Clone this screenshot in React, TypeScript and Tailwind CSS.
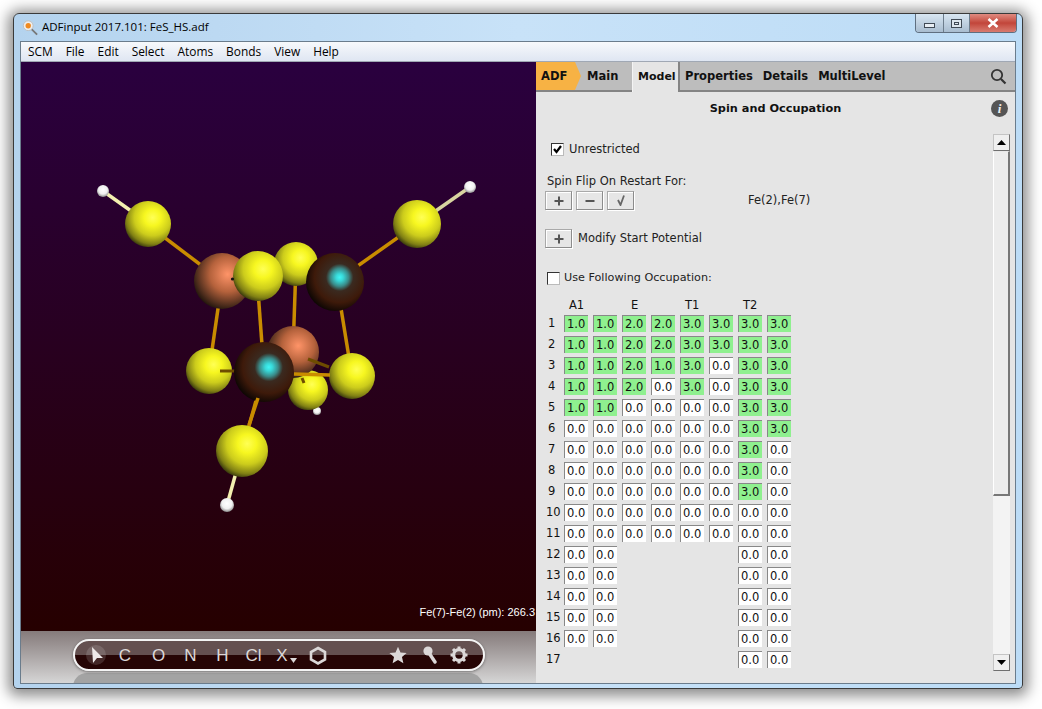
import React from "react";

const seg = { fontFamily: '"Open Sans", "Noto Sans", sans-serif' };
const ver = { fontFamily: '"DejaVu Sans", sans-serif' };

type Atom = { x: number; y: number; r: number; kind: "s" | "fe" | "dark" | "h" };

// draw order: back to front
const backBonds = [
  { x1: 103, y1: 191, x2: 148, y2: 223, c: "#f4f0b0" },
  { x1: 148, y1: 225, x2: 222, y2: 281, c: "#c98c00" },
  { x1: 470, y1: 187, x2: 417, y2: 224, c: "#d8d4a0" },
  { x1: 417, y1: 224, x2: 335, y2: 282, c: "#c98c00" },
  { x1: 296, y1: 264, x2: 293, y2: 352, c: "#c98c00" },
  { x1: 222, y1: 281, x2: 209, y2: 371, c: "#c98c00" },
  { x1: 257, y1: 277, x2: 264, y2: 372, c: "#c98c00" },
  { x1: 338, y1: 290, x2: 352, y2: 376, c: "#c98c00" },
  { x1: 270, y1: 275, x2: 335, y2: 282, c: "#c98c00" },
  { x1: 264, y1: 372, x2: 242, y2: 451, c: "#c98c00" },
  { x1: 242, y1: 451, x2: 227, y2: 505, c: "#f4f0b0" },
];

const atoms: Atom[] = [
  { x: 296, y: 264, r: 22, kind: "s" },
  { x: 148, y: 224, r: 23, kind: "s" },
  { x: 103, y: 191, r: 6, kind: "h" },
  { x: 470, y: 187, r: 6, kind: "h" },
  { x: 417, y: 224, r: 24, kind: "s" },
  { x: 222, y: 281, r: 28, kind: "fe" },
  { x: 335, y: 282, r: 29, kind: "dark" },
  { x: 258, y: 276, r: 25, kind: "s" },
  { x: 317, y: 411, r: 4, kind: "h" },
  { x: 308, y: 390, r: 20, kind: "s" },
  { x: 293, y: 352, r: 26, kind: "fe" },
  { x: 209, y: 371, r: 23, kind: "s" },
  { x: 352, y: 376, r: 23, kind: "s" },
  { x: 242, y: 451, r: 26, kind: "s" },
  { x: 227, y: 505, r: 7, kind: "h" },
];

function Molecule() {
  const fill = { s: "url(#sul)", fe: "url(#fe)", dark: "url(#dark)", h: "url(#hyd)" };
  return (
    <svg width="515" height="569" viewBox="21 62 515 569" className="block">
      <defs>
        <linearGradient id="bg" x1="0" y1="0" x2="0" y2="1">
          <stop offset="0" stopColor="#2a003f" />
          <stop offset="1" stopColor="#260000" />
        </linearGradient>
        <radialGradient id="sul" cx="0.6" cy="0.36" r="0.72">
          <stop offset="0" stopColor="#ffff55" />
          <stop offset="0.25" stopColor="#f7f720" />
          <stop offset="0.55" stopColor="#cccc1c" />
          <stop offset="0.8" stopColor="#808014" />
          <stop offset="1" stopColor="#14140a" />
        </radialGradient>
        <radialGradient id="fe" cx="0.6" cy="0.38" r="0.7">
          <stop offset="0" stopColor="#ff9468" />
          <stop offset="0.45" stopColor="#b5623c" />
          <stop offset="0.8" stopColor="#4c2c1c" />
          <stop offset="1" stopColor="#0e0b06" />
        </radialGradient>
        <radialGradient id="dark" cx="0.58" cy="0.42" r="0.62">
          <stop offset="0" stopColor="#40f5f5" />
          <stop offset="0.1" stopColor="#38d8d8" />
          <stop offset="0.25" stopColor="#3a8a88" />
          <stop offset="0.38" stopColor="#3a2a20" />
          <stop offset="0.7" stopColor="#3e1a0a" />
          <stop offset="1" stopColor="#0a0503" />
        </radialGradient>
        <radialGradient id="hyd" cx="0.5" cy="0.4" r="0.6">
          <stop offset="0" stopColor="#ffffff" />
          <stop offset="0.6" stopColor="#f0f0f0" />
          <stop offset="1" stopColor="#8a8a8a" />
        </radialGradient>
      </defs>
      <rect x="21" y="62" width="515" height="569" fill="url(#bg)" />
      {backBonds.map((b, i) => (
        <line key={i} x1={b.x1} y1={b.y1} x2={b.x2} y2={b.y2} stroke={b.c} strokeWidth="3.5" />
      ))}
      {atoms.map((a, i) => (
        <circle key={i} cx={a.x} cy={a.y} r={a.r} fill={fill[a.kind]} />
      ))}
      <circle cx="232.5" cy="279" r="1.6" fill="#111" />
      {/* bonds that lie in front of the lower ring */}
      <line x1="308" y1="359" x2="329" y2="367" stroke="#6e4c00" strokeWidth="3" />
      <line x1="220" y1="371" x2="236" y2="371" stroke="#6e4c00" strokeWidth="3" />
      <line x1="302" y1="378" x2="304" y2="383" stroke="#6e4c00" strokeWidth="3" />
      <circle cx="264" cy="372" r="30" fill="url(#dark)" />
      <line x1="294" y1="374" x2="330" y2="375" stroke="#c98c00" strokeWidth="3.5" />
      <line x1="258" y1="398" x2="249" y2="425" stroke="#c98c00" strokeWidth="3.5" />
    </svg>
  );
}

function Toolbar() {
  const letters = ["C", "O", "N", "H", "Cl"];
  const xs = ["w-[35px]", "w-[32px]", "w-[32px]", "w-[32px]", "w-[30px]"];
  return (
    <div className="relative flex-1 bg-gradient-to-b from-[#857b7b] to-[#d6d6d6] flex justify-center pt-[8px] overflow-hidden">
      <div className="absolute left-[52px] bottom-[-8px] w-[410px] h-[18px] rounded-t-[14px] bg-[#a3a3a3]" />
      <div
        className="relative w-[412px] h-[32px] rounded-full border-2 border-[#f4f4f4] shadow-[0_1px_3px_rgba(0,0,0,0.4)] overflow-hidden bg-gradient-to-b from-[#645050] from-50% to-[#260505] to-50% flex items-center pl-[11px] text-[#dcd8d8] text-[17px]"
        style={{ fontFamily: '"Liberation Sans", sans-serif' }}
      >
        <svg width="22" height="24" viewBox="0 0 22 24" className="shrink-0">
          <circle cx="10" cy="12" r="10" fill="#ffffff" opacity="0.14" />
          <path d="M6 4 L17 15 L11 15 L7 20 Z" fill="#eeeaea" />
        </svg>
        {letters.map((l, i) => (
          <span key={l} className={`${xs[i]} shrink-0 text-center leading-none`}>
            {l}
          </span>
        ))}
        <span className="w-[30px] ml-[3px] shrink-0 flex items-end justify-center leading-none">
          X
          <svg width="7" height="5" viewBox="0 0 7 5" className="mb-[1px] ml-[2px]">
            <path d="M0 0 H7 L3.5 5 Z" fill="#dcd8d8" />
          </svg>
        </span>
        <svg width="18" height="19" viewBox="0 0 18 19" className="shrink-0 ml-[7px]">
          <path d="M9 2 L16 6 V13.5 L9 17.5 L2 13.5 V6 Z" fill="none" stroke="#dcd8d8" strokeWidth="2.6" />
        </svg>
        <svg width="18" height="18" viewBox="0 0 24 24" className="shrink-0 ml-[62px]">
          <path d="M12 1 L15.3 8.6 L23.5 9.4 L17.3 14.8 L19.2 23 L12 18.7 L4.8 23 L6.7 14.8 L0.5 9.4 L8.7 8.6 Z" fill="#dcd8d8" />
        </svg>
        <svg width="14" height="18" viewBox="0 0 14 18" className="shrink-0 ml-[16px]">
          <circle cx="5" cy="5" r="4.6" fill="#dcd8d8" />
          <path d="M6 7 L12 16" stroke="#dcd8d8" strokeWidth="3.4" strokeLinecap="round" />
        </svg>
        <svg width="18" height="18" viewBox="0 0 18 18" className="shrink-0 ml-[13px]">
          <circle cx="9" cy="9" r="5.3" fill="none" stroke="#dcd8d8" strokeWidth="3.2" />
          <path
            d="M9 0.5 V4 M9 14 V17.5 M0.5 9 H4 M14 9 H17.5 M3 3 L5.4 5.4 M12.6 12.6 L15 15 M15 3 L12.6 5.4 M5.4 12.6 L3 15"
            stroke="#dcd8d8"
            strokeWidth="3"
          />
        </svg>
      </div>
    </div>
  );
}

function SmallButton({ children }: { children: React.ReactNode }) {
  return (
    <div className="w-[27px] h-[19px] shrink-0 flex items-center justify-center bg-[#e6e6e6] border border-[#a9a9a9] border-r-[#8c8c8c] border-b-[#8c8c8c] shadow-[inset_1px_1px_0_#fff,1px_1px_0_#fff]">
      {children}
    </div>
  );
}

const PlusIcon = () => (
  <svg width="10" height="10" viewBox="0 0 10 10">
    <path d="M5 0.5 V9.5 M0.5 5 H9.5" stroke="#555" strokeWidth="2" />
  </svg>
);
const MinusIcon = () => (
  <svg width="10" height="10" viewBox="0 0 10 10">
    <path d="M0.5 5 H9.5" stroke="#555" strokeWidth="2" />
  </svg>
);
const TickIcon = () => (
  <svg width="8" height="11" viewBox="0 0 8 11">
    <path d="M1 5 L3.5 10 L7 0.5" fill="none" stroke="#666" strokeWidth="1.8" />
  </svg>
);

function Check({ on }: { on?: boolean }) {
  return (
    <div className="w-[13px] h-[13px] bg-white border border-[#333] border-r-[#bbb] border-b-[#bbb] flex items-center justify-center shrink-0">
      {on && (
        <svg width="9" height="9" viewBox="0 0 9 9">
          <path d="M1 4 L3.5 7 L8 1" fill="none" stroke="#000" strokeWidth="2.2" />
        </svg>
      )}
    </div>
  );
}

const rows: (string | null)[][] = [
  ["1.0", "1.0", "2.0", "2.0", "3.0", "3.0", "3.0", "3.0"],
  ["1.0", "1.0", "2.0", "2.0", "3.0", "3.0", "3.0", "3.0"],
  ["1.0", "1.0", "2.0", "1.0", "3.0", "0.0", "3.0", "3.0"],
  ["1.0", "1.0", "2.0", "0.0", "3.0", "0.0", "3.0", "3.0"],
  ["1.0", "1.0", "0.0", "0.0", "0.0", "0.0", "3.0", "3.0"],
  ["0.0", "0.0", "0.0", "0.0", "0.0", "0.0", "3.0", "3.0"],
  ["0.0", "0.0", "0.0", "0.0", "0.0", "0.0", "3.0", "0.0"],
  ["0.0", "0.0", "0.0", "0.0", "0.0", "0.0", "3.0", "0.0"],
  ["0.0", "0.0", "0.0", "0.0", "0.0", "0.0", "3.0", "0.0"],
  ["0.0", "0.0", "0.0", "0.0", "0.0", "0.0", "0.0", "0.0"],
  ["0.0", "0.0", "0.0", "0.0", "0.0", "0.0", "0.0", "0.0"],
  ["0.0", "0.0", null, null, null, null, "0.0", "0.0"],
  ["0.0", "0.0", null, null, null, null, "0.0", "0.0"],
  ["0.0", "0.0", null, null, null, null, "0.0", "0.0"],
  ["0.0", "0.0", null, null, null, null, "0.0", "0.0"],
  ["0.0", "0.0", null, null, null, null, "0.0", "0.0"],
  [null, null, null, null, null, null, "0.0", "0.0"],
];

function OccupationGrid() {
  return (
    <div className="ml-[-12px] text-[11.5px] leading-[17px] text-[#111]">
      <div className="grid grid-cols-[repeat(9,24px)] gap-x-[5px] h-[14px] leading-[14px]">
        <div />
        <div className="col-span-2 pl-[5px]">A1</div>
        <div className="col-span-2 pl-[9px]">E</div>
        <div className="col-span-2 pl-[5px]">T1</div>
        <div className="col-span-2 pl-[5px]">T2</div>
      </div>
      <div className="grid grid-cols-[repeat(9,24px)] gap-x-[5px] gap-y-[4px] auto-rows-[17px] mt-[3px]">
        {rows.map((r, i) => (
          <React.Fragment key={i}>
            <div className={`whitespace-nowrap ${i < 9 ? "pl-[13px]" : "pl-[11px]"}`}>{i + 1}</div>
            {r.map((v, j) =>
              v === null ? (
                <div key={j} />
              ) : (
                <div
                  key={j}
                  className={`border-t border-l border-t-[#888] border-l-[#888] pl-[2px] leading-[16px] ${
                    v === "0.0" ? "bg-white" : "bg-[#8ff08f]"
                  }`}
                >
                  {v}
                </div>
              )
            )}
          </React.Fragment>
        ))}
      </div>
    </div>
  );
}

function Scrollbar() {
  const btn =
    "w-[17px] h-[17px] shrink-0 bg-[#efefef] border border-[#c4c4c4] border-r-[#707070] border-b-[#707070] flex items-center justify-center";
  return (
    <div className="w-[17px] h-[537px] mt-[8px] flex flex-col shrink-0">
      <div className={btn}>
        <svg width="9" height="5" viewBox="0 0 9 5">
          <path d="M4.5 0 L9 5 H0 Z" fill="#000" />
        </svg>
      </div>
      <div className="h-[345px] shrink-0 bg-[#ececec] border border-[#e8e8e8] border-l-white border-r-2 border-b-2 border-r-[#777] border-b-[#777]" />
      <div className="flex-1 bg-[#f3f3f3]" />
      <div className={btn}>
        <svg width="9" height="5" viewBox="0 0 9 5">
          <path d="M0 0 H9 L4.5 5 Z" fill="#000" />
        </svg>
      </div>
    </div>
  );
}

function Panel() {
  return (
    <div className="flex-1 flex flex-col bg-[#e5e5e5] min-w-0" style={ver}>
      <div className="h-[30px] shrink-0 flex bg-[#bdbdbd] border-b-2 border-[#848484] text-[11.5px] font-bold text-[#111] items-stretch relative">
        <div className="w-[39px] bg-[#f7b244] flex items-center pl-[5px] pt-[2px] text-[#111]">ADF</div>
        <svg width="6" height="28" viewBox="0 0 6 28" className="shrink-0">
          <path d="M0 0 L6 14 L0 28 Z" fill="#f7b244" />
        </svg>
        <div className="w-[51px] flex items-center pl-[6px] pt-[2px]">Main</div>
        <div className="w-[48px] h-[30px] bg-[#e5e5e5] border-l border-l-[#f4f4f4] border-r-2 border-r-[#848484] flex items-center pl-[5px] text-[11px] z-10 mr-[5px]">
          Model
        </div>
        <div className="flex items-center pt-[2px] mr-[10px]">Properties</div>
        <div className="flex items-center pt-[2px] mr-[10px]">Details</div>
        <div className="flex items-center pt-[2px]">MultiLevel</div>
        <svg width="17" height="17" viewBox="0 0 17 17" className="absolute right-[8px] top-[6px]">
          <circle cx="7" cy="7" r="5.2" fill="none" stroke="#333" strokeWidth="1.8" />
          <path d="M11 11 L15.5 15.5" stroke="#333" strokeWidth="2.2" />
        </svg>
      </div>
      <div className="relative flex-1">
        <div className="h-[34px] flex items-center justify-center text-[11.3px] font-bold text-[#111]">
          Spin and Occupation
        </div>
        <div
          className="absolute right-[7px] top-[8px] w-[17px] h-[17px] rounded-full bg-[#555] flex items-center justify-center text-[#eee] text-[13px] font-bold italic leading-none"
          style={{ fontFamily: '"Liberation Serif", serif' }}
        >
          i
        </div>
        <div className="flex pr-[5px]">
          <div className="flex-1 pl-[11px] text-[11.5px] text-[#222] min-w-0">
            <div className="flex items-center gap-[5px] mt-[17px] ml-[4px] h-[13px]">
              <Check on />
              <span>Unrestricted</span>
            </div>
            <div className="mt-[19px] h-[13px] leading-[13px] whitespace-nowrap">Spin Flip On Restart For:</div>
            <div className="flex items-center gap-[4px] mt-[3px] ml-[-2px]">
              <SmallButton>
                <PlusIcon />
              </SmallButton>
              <SmallButton>
                <MinusIcon />
              </SmallButton>
              <SmallButton>
                <TickIcon />
              </SmallButton>
              <span className="ml-[110px]">Fe(2),Fe(7)</span>
            </div>
            <div className="flex items-center gap-[6px] mt-[19px] ml-[-2px]">
              <SmallButton>
                <PlusIcon />
              </SmallButton>
              <span>Modify Start Potential</span>
            </div>
            <div className="flex items-center gap-[4px] mt-[24px] h-[13px]">
              <Check />
              <span className="text-[11.2px]">Use Following Occupation:</span>
            </div>
            <div className="mt-[13px]">
              <OccupationGrid />
            </div>
          </div>
          <Scrollbar />
        </div>
      </div>
    </div>
  );
}

export default function App() {
  return (
    <div className="w-[1042px] h-[709px] bg-white pt-[13px] pl-[13px] overflow-hidden">
      <div className="w-[1010px] h-[676px] rounded-t-[6px] rounded-b-[4px] border border-[#3a3a3a] bg-gradient-to-r from-[#b4d3ee] via-[#c8e2f8] to-[#bcdcf6] shadow-[0_2px_14px_5px_rgba(0,0,0,0.45)] flex flex-col">
        <div className="h-[27px] flex items-start shrink-0 pl-[8px] relative">
          <svg width="16" height="17" viewBox="0 0 18 18" className="mt-[5px] shrink-0">
            <circle cx="7" cy="7" r="5.5" fill="#eee" stroke="#bbb" />
            <circle cx="7" cy="7" r="3" fill="#f08a20" />
            <path d="M11 11 L17 17" stroke="#777" strokeWidth="2" />
          </svg>
          <span className="ml-[4px] mt-[3px] text-[11.5px] leading-[20px] text-black" style={seg}>
            ADFinput 2017.101: FeS_HS.adf
          </span>
          <div className="absolute right-[5px] top-0 flex h-[19px] rounded-b-[4px] border border-t-0 border-[#5f6f80] overflow-hidden">
            <div className="w-[28px] bg-gradient-to-b from-[#d8e6f2] to-[#a9bdd0] border-r border-[#6d7d8c] flex items-center justify-center">
              <div className="w-[11px] h-[5px] mt-[4px] bg-[#e8eef4] border border-[#404a55]" />
            </div>
            <div className="w-[26px] bg-gradient-to-b from-[#d8e6f2] to-[#a9bdd0] border-r border-[#6d7d8c] flex items-center justify-center">
              <div className="w-[11px] h-[9px] bg-[#dde6ee] border border-[#404a55] flex items-center justify-center">
                <div className="w-[5px] h-[3px] border border-[#404a55]" />
              </div>
            </div>
            <div className="w-[46px] bg-gradient-to-b from-[#e08a80] via-[#c2453a] to-[#d87b70] flex items-center justify-center">
              <svg width="12" height="10" viewBox="0 0 12 10">
                <path d="M1.5 1 L10.5 9 M10.5 1 L1.5 9" stroke="#fff" strokeWidth="2.6" />
              </svg>
            </div>
          </div>
        </div>
        <div className="mx-[6px] h-[643px] border border-[#6a7c8c] flex flex-col bg-white overflow-hidden">
          <div
            className="h-[20px] shrink-0 flex items-center pl-[7px] gap-[13px] text-[11.9px] text-black bg-gradient-to-b from-[#f7f9fc] to-[#dfe6f2] border-b border-[#a0a8b4]"
            style={seg}
          >
            <span>SCM</span>
            <span>File</span>
            <span>Edit</span>
            <span>Select</span>
            <span>Atoms</span>
            <span>Bonds</span>
            <span>View</span>
            <span>Help</span>
          </div>
          <div className="flex flex-1 min-h-0">
            <div className="w-[515px] shrink-0 flex flex-col">
              <div className="relative h-[569px] shrink-0">
                <Molecule />
                <div
                  className="absolute right-[1px] bottom-[12px] text-[11px] leading-[13px] text-white"
                  style={{ fontFamily: '"Liberation Sans", sans-serif' }}
                >
                  Fe(7)-Fe(2) (pm): 266.3
                </div>
              </div>
              <Toolbar />
            </div>
            <Panel />
          </div>
        </div>
      </div>
    </div>
  );
}
